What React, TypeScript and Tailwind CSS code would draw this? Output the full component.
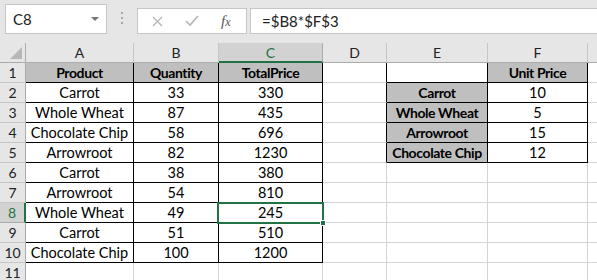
import * as React from 'react';

type Col = { key: string; label: string; w: number };

const cols: Col[] = [
  { key: 'A', label: 'A', w: 108 },
  { key: 'B', label: 'B', w: 85 },
  { key: 'C', label: 'C', w: 104 },
  { key: 'D', label: 'D', w: 64 },
  { key: 'E', label: 'E', w: 101 },
  { key: 'F', label: 'F', w: 100 },
  { key: 'G', label: '', w: 20 },
];

const rows: string[][] = [
  ['Product', 'Quantity', 'TotalPrice', '', '', 'Unit Price', ''],
  ['Carrot', '33', '330', '', 'Carrot', '10', ''],
  ['Whole Wheat', '87', '435', '', 'Whole Wheat', '5', ''],
  ['Chocolate Chip', '58', '696', '', 'Arrowroot', '15', ''],
  ['Arrowroot', '82', '1230', '', 'Chocolate Chip', '12', ''],
  ['Carrot', '38', '380', '', '', '', ''],
  ['Arrowroot', '54', '810', '', '', '', ''],
  ['Whole Wheat', '49', '245', '', '', '', ''],
  ['Carrot', '51', '510', '', '', '', ''],
  ['Chocolate Chip', '100', '1200', '', '', '', ''],
  ['', '', '', '', '', '', ''],
];

// r is 1-based row, c is 0-based column
const bordered = (r: number, c: number) =>
  (r >= 1 && r <= 10 && c >= 0 && c <= 2) || (r >= 1 && r <= 5 && c >= 4 && c <= 5);

const shaded = (r: number, c: number) =>
  (r === 1 && c <= 2) || (r === 1 && c === 5) || (r >= 2 && r <= 5 && c === 4);

const gridCols = `26px ${cols.map((c) => c.w + 'px').join(' ')}`;

function FormulaBar() {
  return (
    <div className="flex h-[43px] items-end bg-[#e6e6e6] pb-[9px] pl-[5px]">
      <div className="flex h-[30px] w-[102px] items-center justify-between border border-[#c6c6c6] bg-white pl-[7px] pr-[7px]">
        <span className="text-[15px] text-[#222]">C8</span>
        <span className="h-0 w-0 border-x-[4px] border-t-[4px] border-x-transparent border-t-[#777]" />
      </div>
      <div className="mb-[10px] ml-[14px] flex flex-col gap-[3px]">
        <span className="h-[2px] w-[2px] bg-[#a6a6a6]" />
        <span className="h-[2px] w-[2px] bg-[#a6a6a6]" />
        <span className="h-[2px] w-[2px] bg-[#a6a6a6]" />
      </div>
      <div className="ml-[14px] flex h-[26px] w-[110px] items-center border border-[#c6c6c6] bg-white pl-[14px]">
        <svg width="11" height="11" viewBox="0 0 11 11">
          <path d="M1 1 L10 10 M10 1 L1 10" stroke="#b4b4b4" strokeWidth="1.3" fill="none" />
        </svg>
        <svg className="ml-[22px]" width="14" height="12" viewBox="0 0 14 12">
          <path d="M1 6 L5 10 L13 1" stroke="#b4b4b4" strokeWidth="1.6" fill="none" />
        </svg>
        <span className="ml-[22px] font-['Liberation_Serif',serif] text-[15px] italic text-[#555]">
          f<span className="text-[12px]">x</span>
        </span>
      </div>
      <div className="ml-[3px] flex h-[26px] flex-1 items-center border border-r-0 border-[#c6c6c6] bg-white pl-[11px]">
        <span className="text-[15px] text-[#222]">=$B8*$F$3</span>
      </div>
    </div>
  );
}

export default function App() {
  return (
    <div className="h-[280px] w-[597px] overflow-hidden bg-white font-['Lato','Liberation_Sans',sans-serif] text-black">
      <FormulaBar />
      <div className="relative">
        <div className="grid" style={{ gridTemplateColumns: gridCols, gridAutoRows: '20px' }}>
          <div className="relative border-b border-r border-[#ababab] bg-[#e6e6e6]">
            <span className="absolute bottom-[3px] right-[3px] h-0 w-0 border-b-[12px] border-l-[12px] border-b-[#b7b7b7] border-l-transparent" />
          </div>
          {cols.map((c) => (
            <div
              key={c.key}
              className={
                c.key === 'C'
                  ? 'flex items-center justify-center border-b-2 border-r border-b-[#217346] border-r-[#ababab] bg-[#d2d2d2] pt-[1px] text-[14px] text-[#217346]'
                  : 'flex items-center justify-center border-b border-r border-b-[#ababab] border-r-[#c6c6c6] bg-[#e6e6e6] text-[14px] text-[#222]'
              }
            >
              {c.label}
            </div>
          ))}
          {rows.map((row, i) => {
            const r = i + 1;
            return (
              <React.Fragment key={r}>
                <div
                  className={
                    r === 8
                      ? 'flex items-center justify-center border-b border-r-2 border-b-[#ababab] border-r-[#217346] bg-[#d2d2d2] text-[14px] text-[#217346]'
                      : 'flex items-center justify-center border-b border-r border-b-[#c6c6c6] border-r-[#ababab] bg-[#e6e6e6] text-[14px] text-[#222]'
                  }
                >
                  {r}
                </div>
                {row.map((v, c) => {
                  const rightBlack = bordered(r, c) || bordered(r, c + 1);
                  const bottomBlack = bordered(r, c) || bordered(r + 1, c);
                  return (
                    <div
                      key={c}
                      className={[
                        'flex items-center justify-center overflow-hidden whitespace-nowrap border-b border-r',
                        rightBlack ? 'border-r-black' : 'border-r-[#d4d4d4]',
                        bottomBlack ? 'border-b-black' : 'border-b-[#d4d4d4]',
                        shaded(r, c)
                          ? 'bg-[#bfbfbf] text-[14px] font-bold tracking-[-0.4px]'
                          : 'bg-white text-[14.5px]',
                      ].join(' ')}
                    >
                      {v}
                    </div>
                  );
                })}
              </React.Fragment>
            );
          })}
        </div>
        {/* active cell C8 */}
        <div className="pointer-events-none absolute left-[217px] top-[159px] h-[22px] w-[107px] border-2 border-[#217346]" />
        <div className="pointer-events-none absolute left-[320px] top-[177px] h-[6px] w-[6px] border border-white bg-[#217346]" />
      </div>
    </div>
  );
}
